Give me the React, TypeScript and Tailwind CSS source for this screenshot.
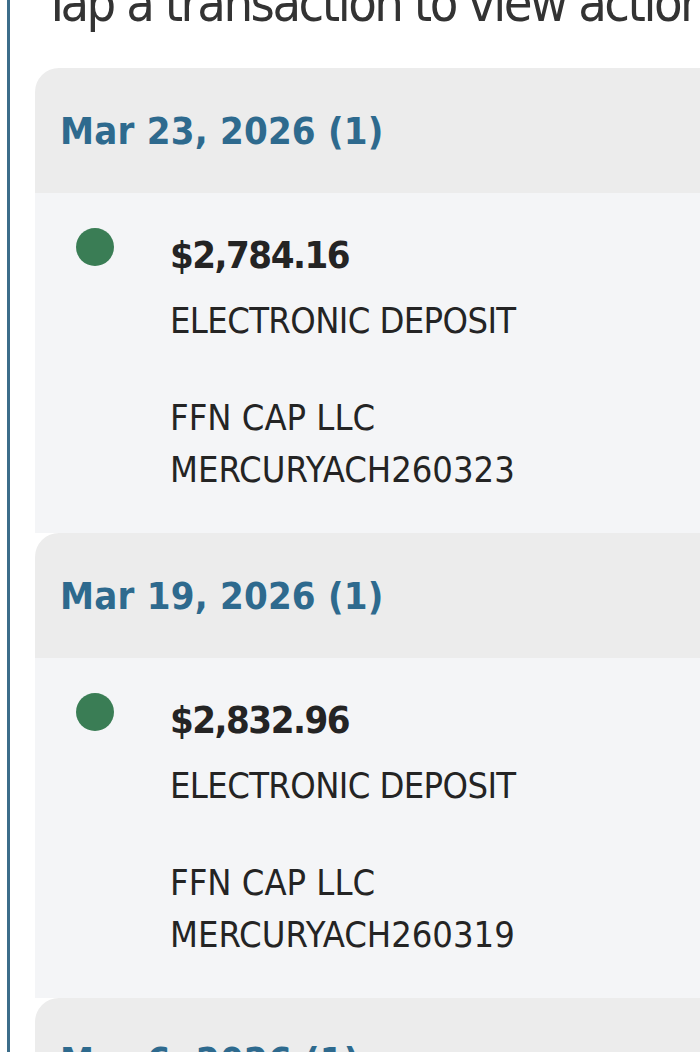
import * as React from "react";

type Txn = {
  date: string;
  count: number;
  amount: string;
  kind: string;
  payer: string;
  ref: string;
};

const txns: Txn[] = [
  {
    date: "Mar 23, 2026",
    count: 1,
    amount: "$2,784.16",
    kind: "ELECTRONIC DEPOSIT",
    payer: "FFN CAP LLC",
    ref: "MERCURYACH260323",
  },
  {
    date: "Mar 19, 2026",
    count: 1,
    amount: "$2,832.96",
    kind: "ELECTRONIC DEPOSIT",
    payer: "FFN CAP LLC",
    ref: "MERCURYACH260319",
  },
  {
    date: "Mar 6, 2026",
    count: 1,
    amount: "$2,790.40",
    kind: "ELECTRONIC DEPOSIT",
    payer: "FFN CAP LLC",
    ref: "MERCURYACH260306",
  },
];

const font = {
  fontFamily:
    '"DejaVu Sans Condensed", "Liberation Sans Narrow", Roboto, sans-serif',
};

function DayGroup({ t }: { t: Txn }) {
  return (
    <div className="w-[700px] rounded-tl-[24px] overflow-hidden shrink-0">
      {/* date header */}
      <div className="h-[125px] bg-[#ececec] flex items-center pl-[25px]">
        <h3 className="text-[38px] font-semibold text-[#2e6a8e] leading-none tracking-[0.2px]">
          {t.date} ({t.count})
        </h3>
      </div>
      {/* transaction row */}
      <div className="h-[340px] bg-[#f4f5f7] flex pt-[36px]">
        <div className="w-[135px] pl-[41px]">
          <div className="w-[38px] h-[38px] -mt-[1px] rounded-full bg-[#3a7d55]" />
        </div>
        <div className="text-[#242424] text-[36px] leading-[52px]">
          <p className="font-semibold text-[38px] tracking-[-1.5px]">{t.amount}</p>
          <p className="mt-[14px] tracking-[-0.6px]">{t.kind}</p>
          <p className="mt-[45px]">{t.payer}</p>
          <p>{t.ref}</p>
        </div>
      </div>
    </div>
  );
}

export default function App() {
  return (
    <div className="w-[700px] h-[1052px] bg-white overflow-hidden" style={font}>
      <div className="ml-[7px] border-l-[3px] border-[#3c6d8a] h-full pl-[25px] flex flex-col">
        <p className="-mt-[25px] text-[52px] leading-[56px] text-[#333] whitespace-nowrap tracking-[-2.5px] pl-[8px]">
          Tap a transaction to view actions
        </p>
        <div className="mt-[37px] flex flex-col">
          {txns.map((t) => (
            <DayGroup key={t.date} t={t} />
          ))}
        </div>
      </div>
    </div>
  );
}
